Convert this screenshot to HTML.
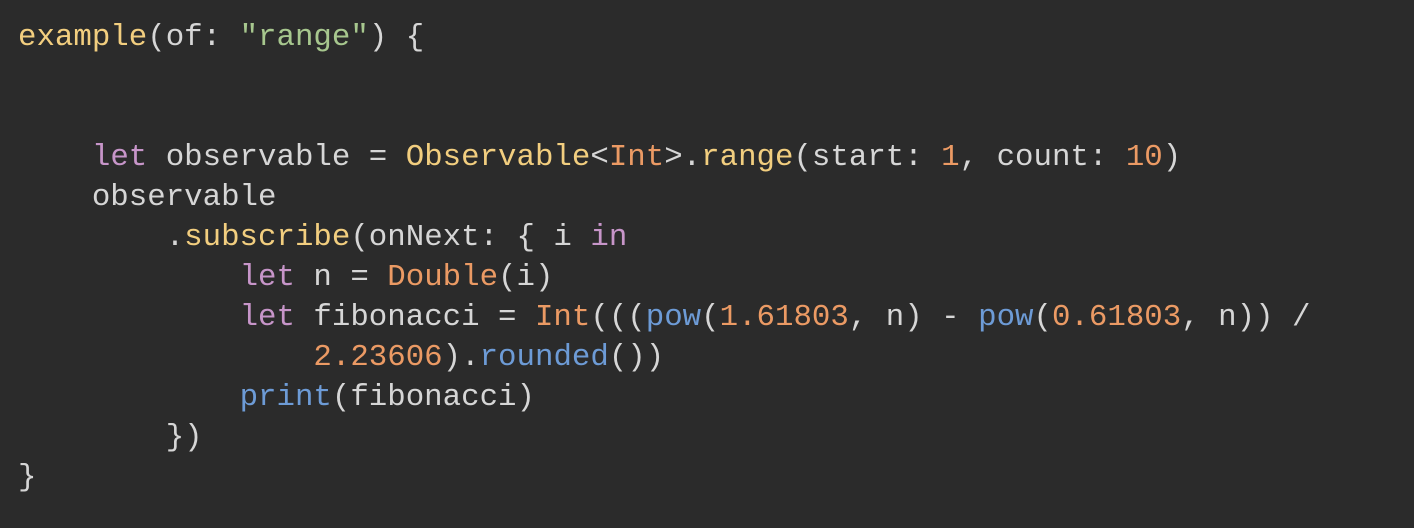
<!DOCTYPE html>
<html><head><style>
html,body{margin:0;padding:0;background:#2b2b2b;width:1414px;height:528px;overflow:hidden}
pre{margin:0;position:absolute;left:18px;top:18px;font-family:"Liberation Mono",monospace;font-size:30.77px;line-height:40px;color:#d6d6d6}
.k{color:#c795c9}.y{color:#f2ce7f}.o{color:#eb9a64}.b{color:#6d9bd6}.g{color:#a7c78e}
</style></head><body>
<pre><span class="y">example</span>(of: <span class="g">"range"</span>) {


    <span class="k">let</span> observable = <span class="y">Observable</span>&lt;<span class="o">Int</span>&gt;.<span class="y">range</span>(start: <span class="o">1</span>, count: <span class="o">10</span>)
    observable
        .<span class="y">subscribe</span>(onNext: { i <span class="k">in</span>
            <span class="k">let</span> n = <span class="o">Double</span>(i)
            <span class="k">let</span> fibonacci = <span class="o">Int</span>(((<span class="b">pow</span>(<span class="o">1.61803</span>, n) - <span class="b">pow</span>(<span class="o">0.61803</span>, n)) /
                <span class="o">2.23606</span>).<span class="b">rounded</span>())
            <span class="b">print</span>(fibonacci)
        })
}</pre>
</body></html>
